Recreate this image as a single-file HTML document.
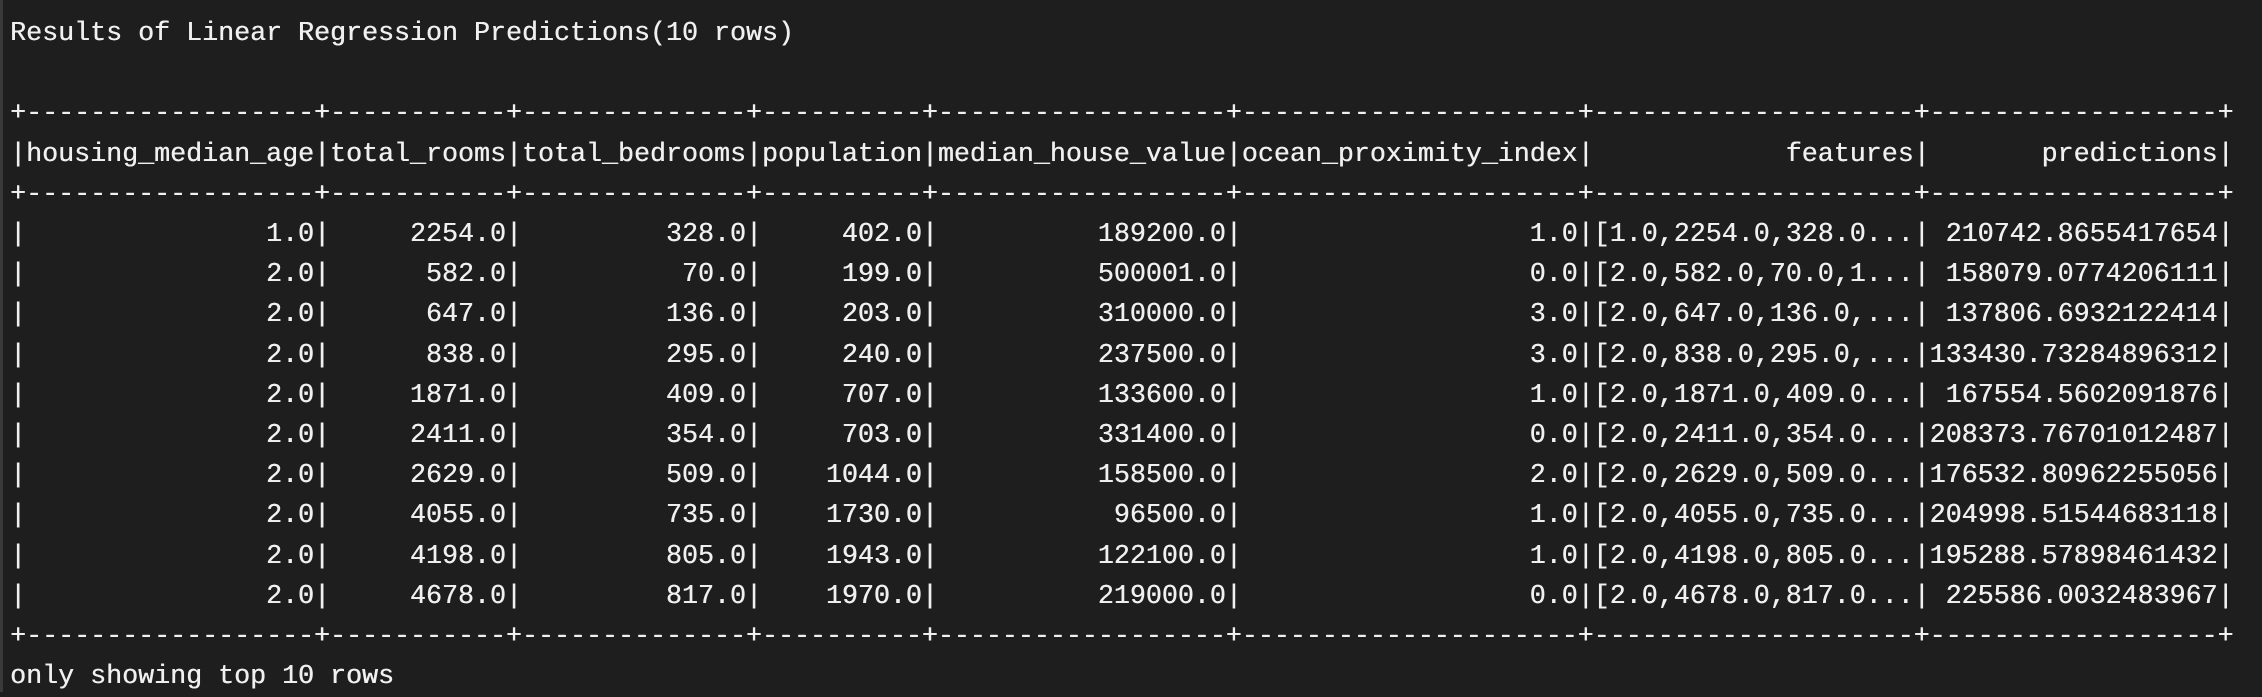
<!DOCTYPE html>
<html><head><meta charset="utf-8"><style>
html,body{margin:0;padding:0;background:#1e1e1e;width:2262px;height:692px;overflow:hidden}
body{border-left:3px solid #3a3a3a;box-sizing:border-box}
pre{margin:0;position:absolute;left:10px;top:14px;font-family:"Liberation Mono",monospace;font-size:26.67px;line-height:40.2px;color:#f0f0f0;white-space:pre;text-shadow:0.4px 0 0 #f0f0f0}
</style></head><body><pre>Results of Linear Regression Predictions(10 rows)

+------------------+-----------+--------------+----------+------------------+---------------------+--------------------+------------------+
|housing_median_age|total_rooms|total_bedrooms|population|median_house_value|ocean_proximity_index|            features|       predictions|
+------------------+-----------+--------------+----------+------------------+---------------------+--------------------+------------------+
|               1.0|     2254.0|         328.0|     402.0|          189200.0|                  1.0|[1.0,2254.0,328.0...| 210742.8655417654|
|               2.0|      582.0|          70.0|     199.0|          500001.0|                  0.0|[2.0,582.0,70.0,1...| 158079.0774206111|
|               2.0|      647.0|         136.0|     203.0|          310000.0|                  3.0|[2.0,647.0,136.0,...| 137806.6932122414|
|               2.0|      838.0|         295.0|     240.0|          237500.0|                  3.0|[2.0,838.0,295.0,...|133430.73284896312|
|               2.0|     1871.0|         409.0|     707.0|          133600.0|                  1.0|[2.0,1871.0,409.0...| 167554.5602091876|
|               2.0|     2411.0|         354.0|     703.0|          331400.0|                  0.0|[2.0,2411.0,354.0...|208373.76701012487|
|               2.0|     2629.0|         509.0|    1044.0|          158500.0|                  2.0|[2.0,2629.0,509.0...|176532.80962255056|
|               2.0|     4055.0|         735.0|    1730.0|           96500.0|                  1.0|[2.0,4055.0,735.0...|204998.51544683118|
|               2.0|     4198.0|         805.0|    1943.0|          122100.0|                  1.0|[2.0,4198.0,805.0...|195288.57898461432|
|               2.0|     4678.0|         817.0|    1970.0|          219000.0|                  0.0|[2.0,4678.0,817.0...| 225586.0032483967|
+------------------+-----------+--------------+----------+------------------+---------------------+--------------------+------------------+
only showing top 10 rows</pre></body></html>
